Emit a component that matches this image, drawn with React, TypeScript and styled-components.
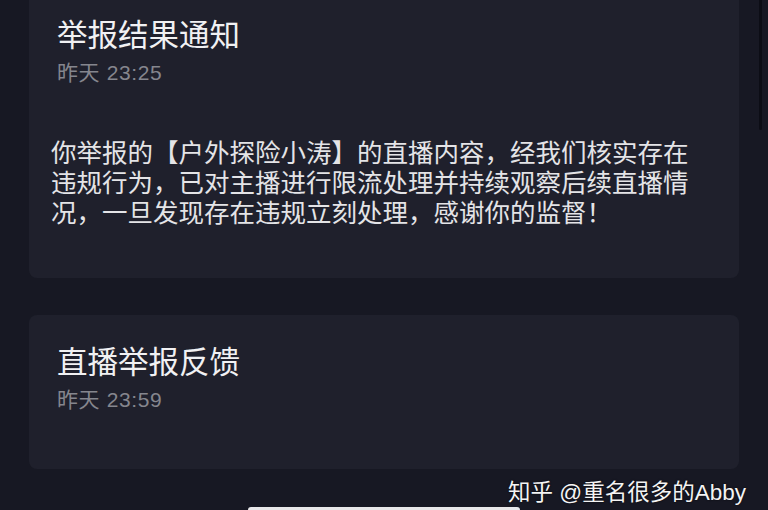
import React from 'react';
import styled, { createGlobalStyle } from 'styled-components';

const Global = createGlobalStyle`
  html, body { margin: 0; padding: 0; background: #171823; }
  body {
    width: 768px;
    height: 510px;
    overflow: hidden;
    font-family: "Liberation Sans", "Noto Sans CJK SC", sans-serif;
  }
`;

const Screen = styled.div`
  position: relative;
  width: 768px;
  height: 510px;
  overflow: hidden;
  background: #171823;
  display: flex;
`;

const List = styled.div`
  flex: 1;
  display: flex;
  flex-direction: column;
  gap: 37px;
  padding: 0 20px 0 29px;
  margin-top: -12px;
`;

const ScrollTrack = styled.div`
  width: 3px;
  margin-right: 6px;
  align-self: flex-start;
  height: 130px;
  background: #0c0d15;
  border-radius: 0 0 2px 2px;
`;

const Card = styled.div<{ pb: number }>`
  background: #1f202c;
  border-radius: 8px;
  padding: 29px 22px ${({ pb }) => pb}px 22px;
`;

const Title = styled.div`
  padding-left: 6px;
  font-size: 30.5px;
  line-height: 36px;
  color: #f1f1f3;
`;

const Time = styled.div`
  padding-left: 6px;
  margin-top: 8px;
  font-size: 21px;
  line-height: 24px;
  letter-spacing: 0.6px;
  color: #85868e;
`;

const Body = styled.p`
  margin: 51px 0 0 0;
  white-space: pre-line;
  font-family: "Noto Sans CJK SC", sans-serif;
  font-size: 25.5px;
  line-height: 30px;
  color: #e4e4e7;
`;

const Watermark = styled.div`
  position: absolute;
  right: 22px;
  bottom: 4px;
  font-size: 22.5px;
  line-height: 26px;
  color: #f4f4f4;
  text-shadow: 0 0 2px rgba(0, 0, 0, 0.8);
`;

const HomeBar = styled.div`
  position: absolute;
  left: 248px;
  bottom: -3px;
  width: 272px;
  height: 6px;
  border-radius: 3px;
  background: #e8e8ea;
`;

const bodyText = [
  '你举报的【户外探险小涛】的直播内容，经我们核实存在',
  '违规行为，已对主播进行限流处理并持续观察后续直播情',
  '况，一旦发现存在违规立刻处理，感谢你的监督！',
].join('\n');

export default function App() {
  return (
    <>
      <Global />
      <Screen>
        <List>
          <Card pb={52}>
            <Title>举报结果通知</Title>
            <Time>昨天 23:25</Time>
            <Body>{bodyText}</Body>
          </Card>
          <Card pb={57}>
            <Title>直播举报反馈</Title>
            <Time>昨天 23:59</Time>
          </Card>
        </List>
        <ScrollTrack />
        <Watermark>知乎 @重名很多的Abby</Watermark>
        <HomeBar />
      </Screen>
    </>
  );
}
